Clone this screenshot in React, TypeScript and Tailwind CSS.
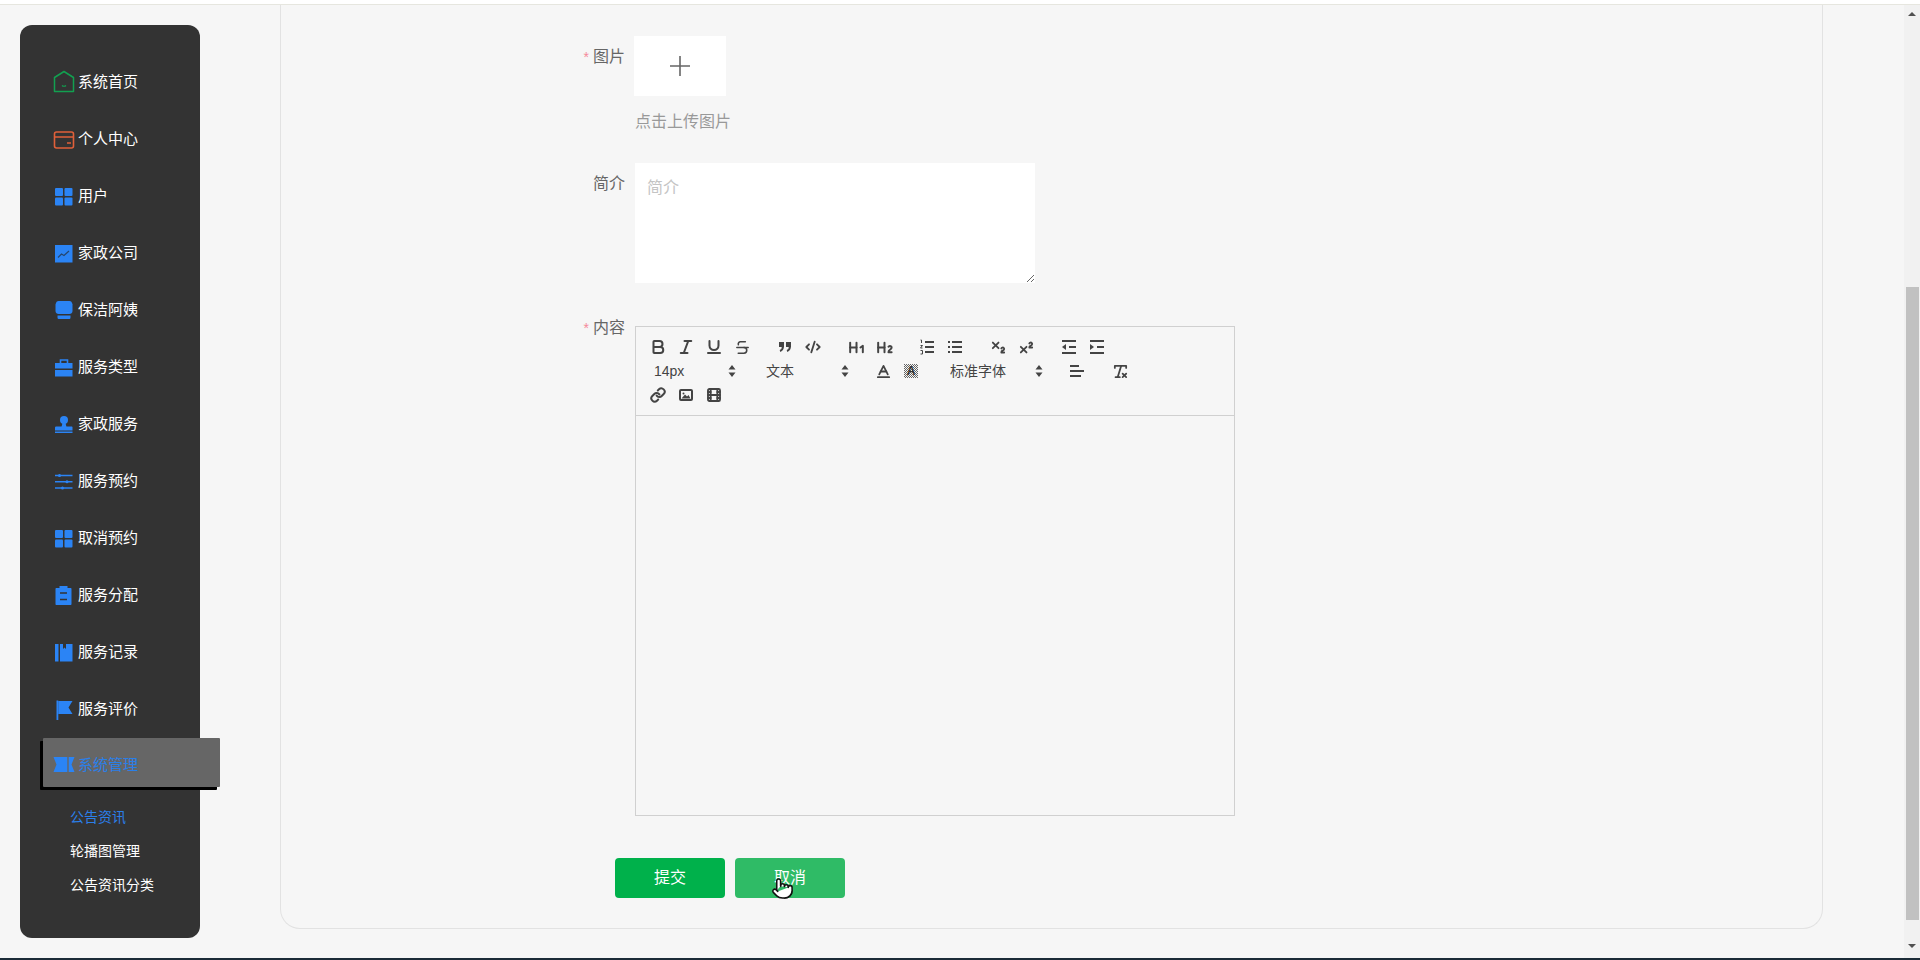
import type { ReactNode } from "react";
import {
  Baseline,
  Bold,
  CodeXml,
  Film,
  Heading1,
  Heading2,
  Italic,
  Link,
  Pointer,
  RemoveFormatting,
  Strikethrough,
  Subscript,
  Superscript,
  Underline,
} from "lucide-react";

function Svg({ children }: { children: ReactNode }) {
  return (
    <svg viewBox="0 0 18 18" className="w-[18px] h-[18px] shrink-0 overflow-visible mr-[5px]" fill="#2b84f5">
      {children}
    </svg>
  );
}

const grid = (
  <Svg>
    <rect x="0" y="0" width="8" height="8" rx="1" />
    <rect x="9.5" y="0" width="8" height="8" rx="1" />
    <rect x="0" y="9.5" width="8" height="8" rx="1" />
    <rect x="9.5" y="9.5" width="8" height="8" rx="1" />
  </Svg>
);

const menu: { label: string; icon: ReactNode }[] = [
  {
    label: "系统首页",
    icon: (
      <Svg>
        <path d="M9-2.5 18.5 3.5V17.5H-.5V3.5Z" fill="none" stroke="#12a050" strokeWidth="1.5" strokeLinejoin="round" />
        <path d="M7 11.5c1 1 3 1 4 0" fill="none" stroke="#12a050" strokeWidth="1.1" />
      </Svg>
    ),
  },
  {
    label: "个人中心",
    icon: (
      <Svg>
        <rect x="-.5" y="1" width="19" height="16" rx="2" fill="none" stroke="#e0603a" strokeWidth="1.6" />
        <path d="M-.5 6h19M12 12h4" fill="none" stroke="#e0603a" strokeWidth="1.6" />
      </Svg>
    ),
  },
  { label: "用户", icon: grid },
  {
    label: "家政公司",
    icon: (
      <Svg>
        <rect x="0" y="0" width="17.5" height="17.5" />
        <path d="M3 12.5 6.5 9l2.5 1.5L14 6" fill="none" stroke="#26466e" strokeWidth="1.2" />
      </Svg>
    ),
  },
  {
    label: "保洁阿姨",
    icon: (
      <Svg>
        <path d="M3.5-1h11c1.5 0 2.5 1 3 3.5V9c0 2-1.5 3-3 3h-11C2 12 .5 11 .5 9V2.5C1-0 2-1 3.5-1Z" />
        <path d="M2.5 13.5h13v2c0 1-.7 1.5-1.5 1.5H4c-.8 0-1.5-.5-1.5-1.5Z" />
      </Svg>
    ),
  },
  {
    label: "服务类型",
    icon: (
      <Svg>
        <path d="M5.5 4V1h7v3" fill="none" stroke="#2b84f5" strokeWidth="1.6" />
        <rect x="0" y="4" width="17.5" height="5.5" />
        <rect x="0" y="11" width="17.5" height="6.5" />
      </Svg>
    ),
  },
  {
    label: "家政服务",
    icon: (
      <Svg>
        <circle cx="9" cy="4" r="4" />
        <path d="M7.5 7h3l1 4h-5Z" />
        <path d="M1.5 10.5h15c.7 0 1 .4 1 1v3H0v-3c0-.6.7-1 1.5-1Z" />
        <rect x="0" y="15.5" width="17.5" height="1.5" />
      </Svg>
    ),
  },
  {
    label: "服务预约",
    icon: (
      <Svg>
        <path d="M0 2.5h17.5M0 8.8h17.5M0 15h17.5" stroke="#2b84f5" strokeWidth="1.5" />
        <rect x="3" y="1" width="3" height="3" rx="1.5" />
        <rect x="10.5" y="7.3" width="3" height="3" rx="1.5" />
        <rect x="6" y="13.5" width="3" height="3" rx="1.5" />
      </Svg>
    ),
  },
  { label: "取消预约", icon: grid },
  {
    label: "服务分配",
    icon: (
      <Svg>
        <path d="M1.5 1h3V-1h8v2h3c.7 0 1 .4 1 1v15c0 .7-.4 1-1 1h-14c-.7 0-1-.4-1-1V2c0-.6.4-1 1-1Z" />
        <path d="M5 6h7M5 12.5h7" stroke="#333" strokeWidth="1.3" />
      </Svg>
    ),
  },
  {
    label: "服务记录",
    icon: (
      <Svg>
        <rect x="0" y="0" width="3.5" height="17.5" />
        <path d="M5 0h3v5l1.5-1.5L11 5V0h6.5v17.5H5Z" />
      </Svg>
    ),
  },
  {
    label: "服务评价",
    icon: (
      <Svg>
        <rect x="1.5" y="-.5" width="1.8" height="19.5" />
        <path d="M3.3 0h14.2l-4 6.5 4 6.5H3.3Z" />
      </Svg>
    ),
  },
];

function Toolbtn({ children }: { children: ReactNode }) {
  return <span className="w-[28px] h-[24px] flex items-center justify-center shrink-0 text-[#444]">{children}</span>;
}

function Picker({ label, width }: { label: string; width: string }) {
  return (
    <span className={`h-[24px] flex items-center justify-between pl-[10px] pr-[5px] text-[14px] text-[#444] shrink-0 ${width}`}>
      {label}
      <svg viewBox="0 0 8 12" className="w-[8px] h-[12px]" fill="#444">
        <path d="M4 0 7.5 4.5H.5ZM4 12 .5 7.5H7.5Z" />
      </svg>
    </span>
  );
}

// quill style line icons, 18 box with 2px strokes
function Lines({ children }: { children: ReactNode }) {
  return (
    <svg viewBox="0 0 18 18" className="w-[18px] h-[18px]" fill="none" stroke="#444" strokeWidth="2">
      {children}
    </svg>
  );
}

const ic = { size: 18, strokeWidth: 2.7 };

function Toolbar() {
  return (
    <div className="h-[89px] border-b border-[#d0d0d0] p-[8px]">
      <div className="flex h-[24px]">
        <Toolbtn><Bold {...ic} /></Toolbtn>
        <Toolbtn><Italic {...ic} /></Toolbtn>
        <Toolbtn><Underline {...ic} /></Toolbtn>
        <Toolbtn><Strikethrough size={17} strokeWidth={2.2} /></Toolbtn>
        <div className="w-[15px]" />
        <Toolbtn>
          <Lines>
            <rect x="4" y="5" width="3" height="3" fill="#444" />
            <rect x="11" y="5" width="3" height="3" fill="#444" />
            <path d="M7 8c0 4-3 5-3 5M14 8c0 4-3 5-3 5" />
          </Lines>
        </Toolbtn>
        <Toolbtn><CodeXml size={16} strokeWidth={2.8} /></Toolbtn>
        <div className="w-[15px]" />
        <Toolbtn><Heading1 size={19} strokeWidth={2.5} /></Toolbtn>
        <Toolbtn><Heading2 size={19} strokeWidth={2.5} /></Toolbtn>
        <div className="w-[15px]" />
        <Toolbtn>
          <Lines>
            <path d="M7 4h9M7 9h9M7 14h9" />
            <path d="M2.5 2h1v3M2.5 7.5h2l-2 2.5h2M2.5 12.5h2v3.5h-2" strokeWidth="1" />
          </Lines>
        </Toolbtn>
        <Toolbtn>
          <Lines>
            <path d="M6 4h10M6 9h10M6 14h10M2 4h2M2 9h2M2 14h2" />
          </Lines>
        </Toolbtn>
        <div className="w-[15px]" />
        <Toolbtn><Subscript size={17} strokeWidth={2.6} /></Toolbtn>
        <Toolbtn><Superscript size={17} strokeWidth={2.6} /></Toolbtn>
        <div className="w-[15px]" />
        <Toolbtn>
          <Lines>
            <path d="M2 3h14M9 9h7M2 15h14" />
            <path d="M6 6 2 9l4 3Z" fill="#444" stroke="none" />
          </Lines>
        </Toolbtn>
        <Toolbtn>
          <Lines>
            <path d="M2 3h14M9 9h7M2 15h14" />
            <path d="M2 6l4 3-4 3Z" fill="#444" stroke="none" />
          </Lines>
        </Toolbtn>
      </div>
      <div className="flex h-[24px]">
        <Picker label="14px" width="w-[97px]" />
        <div className="w-[15px]" />
        <Picker label="文本" width="w-[98px]" />
        <div className="w-[15px]" />
        <Toolbtn><Baseline size={17} strokeWidth={2.5} /></Toolbtn>
        <Toolbtn>
          <span className="relative w-[14px] h-[14px] flex items-center justify-center">
            <svg viewBox="0 0 14 14" className="absolute inset-0 w-[14px] h-[14px]">
              <defs>
                <pattern id="hatch" width="2" height="2" patternUnits="userSpaceOnUse">
                  <rect width="1" height="1" fill="#666" />
                  <rect x="1" y="1" width="1" height="1" fill="#666" />
                </pattern>
              </defs>
              <rect width="14" height="14" fill="url(#hatch)" />
            </svg>
            <span className="relative text-[12px] leading-none font-bold text-[#333]">A</span>
          </span>
        </Toolbtn>
        <div className="w-[15px]" />
        <Picker label="标准字体" width="w-[108px]" />
        <div className="w-[15px]" />
        <Toolbtn>
          <Lines>
            <path d="M2 4h9M2 9h14M2 14h11" />
          </Lines>
        </Toolbtn>
        <div className="w-[15px]" />
        <Toolbtn><RemoveFormatting size={17} strokeWidth={2.5} /></Toolbtn>
      </div>
      <div className="flex h-[24px]">
        <Toolbtn><Link size={16} strokeWidth={3} /></Toolbtn>
        <Toolbtn>
          <svg viewBox="0 0 14 12" className="w-[14px] h-[12px]">
            <rect x="1" y="1" width="12" height="10" rx="1" fill="none" stroke="#444" strokeWidth="2" />
            <path d="M2.5 9.5 6 5.5 8 7.5 9.5 6l2 3.5Z" fill="#444" />
            <circle cx="4.5" cy="4.5" r="1" fill="#444" />
          </svg>
        </Toolbtn>
        <Toolbtn><Film size={16} strokeWidth={2.8} /></Toolbtn>
      </div>
    </div>
  );
}

function Label({ text, required }: { text: string; required?: boolean }) {
  return (
    <label className="w-[64px] h-[42px] leading-[42px] text-right text-[16px] text-[#666] whitespace-nowrap shrink-0">
      {required && <span className="text-[#f58a9a] text-[14px] mr-[4px]">*</span>}
      {text}
    </label>
  );
}

export default function App() {
  return (
    <div className="h-[960px] w-[1920px] overflow-hidden flex flex-col bg-[#f6f6f6] font-['Liberation_Sans','Noto_Sans_CJK_SC',sans-serif]">
      <div className="h-[5px] bg-white border-b border-[#e6e6df] shrink-0" />
      <div className="flex-1 flex min-h-0">
        {/* sidebar */}
        <aside className="w-[180px] h-[913px] ml-[20px] mt-[20px] bg-[#333] rounded-[12px] pt-[29px] shrink-0">
          {menu.map((m) => (
            <div key={m.label} className="h-[57px] flex items-center pl-[35px] text-[15px] text-white">
              {m.icon}
              {m.label}
            </div>
          ))}
          <div className="h-[57px] pl-[23px]">
            <div className="w-[177px] h-[49px] bg-[#666] rounded-[1px] shadow-[-3px_3px_0_#000] flex items-center pl-[12px] pt-[5px] text-[15px] text-[#2b7fe8]">
              <Svg>
                <path d="M-1.5 1H19.5L16.5 8.5 19.5 16H-1.5L1.5 8.5Z" />
                <path d="M13 1v15" stroke="#666" strokeWidth="1.4" />
              </Svg>
              系统管理
            </div>
          </div>
          <div className="mt-[5px] pl-[50px] text-[14px] text-white">
            <div className="h-[34px] leading-[34px] text-[#2b7fe8]">公告资讯</div>
            <div className="h-[34px] leading-[34px]">轮播图管理</div>
            <div className="h-[34px] leading-[34px]">公告资讯分类</div>
          </div>
        </aside>

        {/* form card */}
        <main className="w-[1543px] h-[924px] ml-[80px] border-x border-b border-[#e2e2e2] rounded-b-[20px] pt-[31px] pl-[280px] shrink-0">
          <div className="flex gap-[8px]">
            <Label text="图片" required />
            <div>
              <div className="ml-[1px] w-[92px] h-[60px] bg-white flex items-center justify-center">
                <svg viewBox="0 0 20 20" className="w-[20px] h-[20px]" stroke="#666" strokeWidth="1.6">
                  <path d="M10 0v20M0 10h20" />
                </svg>
              </div>
              <div className="mt-[14px] ml-[2px] text-[16px] leading-[24px] text-[#999]">点击上传图片</div>
            </div>
          </div>

          <div className="flex gap-[8px] mt-[29px]">
            <Label text="简介" />
            <textarea
              placeholder="简介"
              className="ml-[2px] w-[400px] h-[120px] bg-white pl-[12px] pt-[13px] text-[16px] leading-[24px] outline-none placeholder:text-[#c4c4c4]"
            />
          </div>

          <div className="flex gap-[8px] mt-[24px]">
            <Label text="内容" required />
            <div className="ml-[2px] mt-[19px] w-[600px] h-[490px] border border-[#d0d0d0] shrink-0">
              <Toolbar />
            </div>
          </div>

          <div className="flex gap-[10px] mt-[42px] ml-[54px]">
            <button className="w-[110px] h-[40px] rounded-[4px] bg-[#00b14b] text-white text-[16px]">提交</button>
            <button className="relative w-[110px] h-[40px] rounded-[4px] bg-[#2fbb66] text-white text-[16px]">
              取消
              <Pointer size={23} fill="#fff" stroke="#111" strokeWidth={1.6} className="absolute left-[36px] top-[19px]" />
            </button>
          </div>
        </main>

        {/* scrollbar */}
        <div className="w-[16px] ml-auto bg-[#f1f1f1] flex flex-col items-center shrink-0">
          <svg viewBox="0 0 8 4" className="w-[8px] h-[4px] mt-[7px] mb-[271px]" fill="#505050">
            <path d="M4 0 8 4H0Z" />
          </svg>
          <div className="w-[13px] h-[633px] bg-[#c1c1c1]" />
          <svg viewBox="0 0 8 4" className="w-[8px] h-[4px] mt-[24px]" fill="#505050">
            <path d="M0 0H8L4 4Z" />
          </svg>
        </div>
      </div>
      <div className="h-[2px] bg-[#1c2c38] shrink-0" />
    </div>
  );
}
